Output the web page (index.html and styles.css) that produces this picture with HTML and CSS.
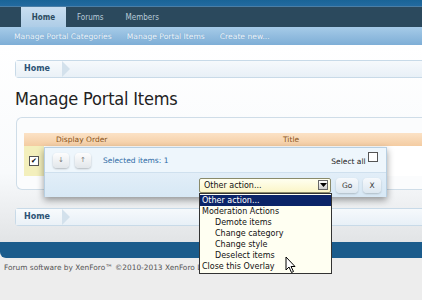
FILE: index.html
```html
<!DOCTYPE html>
<html>
<head>
<meta charset="utf-8">
<link rel="stylesheet" href="styles.css">
</head>
<body>
<div class="page">
  <div class="header">
    <div class="topstripe"></div>
    <nav class="tabs">
      <span class="tab active">Home</span>
      <span class="tab">Forums</span>
      <span class="tab">Members</span>
    </nav>
    <div class="subnav">
      <span>Manage Portal Categories</span>
      <span>Manage Portal Items</span>
      <span>Create new...</span>
    </div>
  </div>
  <div class="content">
    <div class="crumbs"><span class="crumb">Home</span></div>
    <h1 class="title">Manage Portal Items</h1>
    <div class="section">
      <div class="thead">
        <span class="th-order">Display Order</span>
        <span class="th-title">Title</span>
      </div>
      <div class="trow">
        <span class="cb checked">✔</span>
      </div>
    </div>
    <div class="crumbs bottom"><span class="crumb">Home</span></div>
  </div>
  <div class="footbar"></div>
  <div class="copyright">Forum software by XenForo™ ©2010-2013 XenForo Ltd.</div>

  <div class="overlay">
    <div class="ov-top">
      <span class="mbtn">↓</span>
      <span class="mbtn">↑</span>
      <span class="selected">Selected items: 1</span>
      <span class="selall">Select all <span class="cb"></span></span>
    </div>
    <div class="ov-bottom">
      <div class="select">
        <span>Other action...</span>
        <span class="sel-arrow"><svg width="7" height="5" viewBox="0 0 7 5"><path d="M0 0H7L3.5 4Z" fill="#000"/></svg></span>
      </div>
      <span class="btn">Go</span>
      <span class="btn">X</span>
    </div>
  </div>

  <ul class="dropdown">
    <li class="hl">Other action...</li>
    <li>Moderation Actions</li>
    <li class="ind">Demote items</li>
    <li class="ind">Change category</li>
    <li class="ind">Change style</li>
    <li class="ind">Deselect items</li>
    <li>Close this Overlay</li>
  </ul>

  <svg class="cursor" width="12" height="18" viewBox="0 0 12 18">
    <path d="M1 1V14L4 11L6.5 16.5L8.5 15.5L6 10.5H10Z" fill="#fff" stroke="#000" stroke-width="1" stroke-linejoin="round"/>
  </svg>
</div>
</body>
</html>
```
FILE: styles.css
```css
html, body { margin: 0; padding: 0; overflow: hidden; }
body {
  background: #ededed;
  font-family: "DejaVu Sans", Verdana, sans-serif;
  width: 422px;
  height: 300px;
}
.page { position: relative; width: 422px; height: 300px; overflow: hidden; }

.topstripe { height: 6px; background: linear-gradient(#1a6497, #236aa0); border-bottom: 1px solid #4a7ea6; }
.tabs {
  height: 20px;
  background: #2b495d;
  display: flex;
  align-items: stretch;
  padding-left: 21px;
}
.tab {
  font-size: 8px;
  font-family: "DejaVu Sans Condensed", "DejaVu Sans", sans-serif;
  color: #b9cbd9;
  display: flex;
  align-items: center;
  padding: 0 11px;
}
.tab.active {
  background: linear-gradient(#c9def0, #aecde7);
  color: #2b4a5e;
  font-weight: bold;
  width: 23px;
  justify-content: center;
}
.subnav {
  height: 18px;
  background: linear-gradient(#a6cbe8, #7eaed6);
  display: flex;
  align-items: center;
  padding-left: 14px;
  gap: 15px;
  font-size: 7.6px;
  color: #eef5fb;
  text-shadow: 0 0 1px #6a9bc4;
}

.content {
  background: linear-gradient(#ffffff 0%, #f8fafc 65%, #e2e4e6 100%);
  padding: 15px 0 16px 15px;
  height: 197px;
  box-sizing: border-box;
}
.crumbs {
  height: 18px;
  margin-right: -20px;
  border: 1px solid #c8dae8;
  border-right: none;
  border-radius: 4px 0 0 4px;
  background: linear-gradient(#f6f9fc, #e8f0f7);
  box-sizing: border-box;
  display: flex;
  align-items: center;
}
.crumbs.bottom { margin-top: 18px; }
.crumb {
  position: relative;
  font-size: 8px;
  font-weight: bold;
  color: #2d5375;
  padding: 0 12px 0 8px;
  height: 16px;
  line-height: 16px;
  background: linear-gradient(#f8fbfd, #eaf1f7);
}
.crumb::after {
  content: "";
  position: absolute;
  right: -8px;
  top: 0;
  border-left: 8px solid #d3e1ec;
  border-top: 8px solid transparent;
  border-bottom: 8px solid transparent;
}
.title {
  margin: 8px 0 0 0;
  height: 26px;
  font-size: 18px;
  font-weight: normal;
  color: #222;
  line-height: 26px;
  font-family: "DejaVu Sans Condensed", "DejaVu Sans", sans-serif;
  letter-spacing: -0.2px;
}
.section {
  margin: 5px -20px 0 1px;
  height: 73px;
  border: 1px solid #cfdde8;
  border-right: none;
  border-radius: 6px 0 0 6px;
  padding: 15px 0 0 7px;
  box-sizing: border-box;
  background: #fbfcfd;
}
.thead {
  height: 13px;
  background: linear-gradient(#fbe2c6, #f4cca2);
  display: flex;
  align-items: center;
  font-size: 7.5px;
  color: #8a5420;
  position: relative;
}
.th-order { margin-left: 32px; }
.th-title { position: absolute; left: 259px; }
.trow {
  height: 30px;
  background: linear-gradient(90deg, #f3efbc 0, #f3efbc 20px, #fff 20px);
  display: flex;
  align-items: center;
  padding-left: 5px;
}
.cb {
  display: inline-block;
  width: 8px;
  height: 8px;
  border: 1px solid #555;
  background: #fff;
  font-size: 7px;
  line-height: 8px;
  text-align: center;
  color: #000;
  vertical-align: middle;
}

.footbar {
  height: 16px;
  background: #1b5c8c;
  border-radius: 0 0 0 6px;
}
.copyright {
  font-size: 7.4px;
  color: #555;
  margin: 5px 0 0 4px;
  white-space: nowrap;
}

.overlay {
  position: absolute;
  left: 44px;
  top: 147px;
  width: 343px;
  height: 50px;
  border: 1px solid #b7cfe2;
  box-shadow: 0 3px 7px rgba(0,0,0,0.4);
  background: #eef6fc;
  box-sizing: border-box;
}
.ov-top {
  height: 25px;
  display: flex;
  align-items: center;
  padding-left: 8px;
  gap: 6px;
  border-bottom: 1px solid #cfe0ee;
  box-sizing: border-box;
  position: relative;
}
.mbtn {
  width: 16px;
  height: 15px;
  border-radius: 4px;
  background: linear-gradient(#fdfdfd, #e2e6ea);
  box-shadow: 0 1px 2px rgba(0,0,0,0.25);
  font-size: 7px;
  color: #777;
  display: flex;
  align-items: center;
  justify-content: center;
}
.selected { font-size: 7.5px; color: #2d6aa5; margin-left: 6px; }
.selall {
  position: absolute;
  right: 8px;
  top: 4px;
  font-size: 7.5px;
  color: #222;
}
.selall .cb { vertical-align: 2px; }
.ov-bottom {
  height: 24px;
  background: linear-gradient(#e2eef8, #d7e8f5);
  display: flex;
  align-items: center;
  padding-left: 154px;
  gap: 5px;
}
.select {
  width: 132px;
  height: 15px;
  box-sizing: border-box;
  border: 1px solid #8a8a6a;
  border-radius: 2px;
  background: linear-gradient(#fffff0, #fbf5c8);
  display: flex;
  align-items: center;
  justify-content: space-between;
  padding: 0 2px 0 4px;
  font-size: 8px;
  color: #111;
}
.sel-arrow {
  width: 10px;
  height: 10px;
  border: 1px solid #666;
  background: linear-gradient(#fff, #ccc);
  display: flex;
  align-items: center;
  justify-content: center;
  box-sizing: border-box;
}
.btn {
  height: 15px;
  padding: 0 6px;
  border-radius: 4px;
  background: linear-gradient(#f6f9fc, #dce7f0);
  box-shadow: 0 1px 2px rgba(0,0,0,0.2);
  font-size: 7.5px;
  color: #333;
  display: flex;
  align-items: center;
}

.dropdown {
  position: absolute;
  left: 199px;
  top: 193px;
  width: 133px;
  margin: 0;
  padding: 1px 0;
  list-style: none;
  border: 1px solid #333;
  background: #fffff2;
  box-sizing: border-box;
  font-size: 8px;
  color: #111;
}
.dropdown li { height: 11px; line-height: 11px; padding-left: 2px; }
.dropdown li.ind { padding-left: 15px; }
.dropdown li.hl { background: #0b2468; color: #fff; }
.cursor { position: absolute; left: 285px; top: 256px; }
```
